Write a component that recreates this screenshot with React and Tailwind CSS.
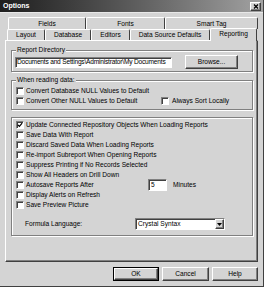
const raised = "border border-t-white border-l-white border-r-[#404040] border-b-[#404040] shadow-[inset_-1px_-1px_0_#808080]";
const sunken = "border border-t-[#808080] border-l-[#808080] border-r-white border-b-white shadow-[inset_1px_1px_0_#404040]";
const etched = "border border-[#808080] shadow-[inset_1px_1px_0_#fff,1px_1px_0_#fff]";

function Box({ checked }) {
    return (
        <span className={`flex h-[8px] w-[8px] shrink-0 items-center justify-center bg-white ${sunken}`}>
            {checked && (
                <svg viewBox="0 0 7 7" className="h-[6px] w-[6px]">
                    <path d="M1 3.3 L2.8 5.2 L6 1.4" stroke="#000" strokeWidth="1.4" fill="none" />
                </svg>
            )}
        </span>
    );
}

function Check({ label, checked, w = "", children }) {
    return (
        <div className="flex h-[10px] items-center">
            <Box checked={checked} />
            <span className={`ml-[2px] whitespace-nowrap ${w}`}>{label}</span>
            {children}
        </div>
    );
}

function Tab({ label, w, selected }) {
    return (
        <div
            className={`flex shrink-0 items-center justify-center rounded-t-[2px] border-l border-t border-r border-l-white border-t-white border-r-[#404040] ${w} ${
                selected ? "relative z-10 -mt-[1px] h-[13px] bg-[#d4d4d4] pb-[2px]" : "h-full"
            }`}
        >
            {label}
        </div>
    );
}

function Button({ label, def, w }) {
    return (
        <div className={`${def ? "border border-black" : ""} ${w} h-[14px]`}>
            <div className={`flex h-full w-full items-center justify-center ${raised}`}>{label}</div>
        </div>
    );
}

export default function App() {
    return (
        <div className="flex h-[287px] w-[264px] flex-col overflow-hidden border-r border-b border-[#404040] bg-[#d4d4d4] font-['Liberation_Sans',Arial,sans-serif] text-[6.6px] leading-[8px] text-black">
            {/* title bar */}
            <div className="flex h-[12px] shrink-0 items-center justify-between bg-gradient-to-r from-[#1e1e1e] to-[#a2a2a2] pl-[3px] pr-[2px]">
                <span className="text-[7px] font-bold text-white">Options</span>
                <div className={`flex h-[9px] w-[11px] items-center justify-center bg-[#d4d4d4] ${raised}`}>
                    <svg viewBox="0 0 6 5" className="h-[5px] w-[6px]">
                        <path d="M1 0.5 L5 4.5 M5 0.5 L1 4.5" stroke="#000" strokeWidth="1.3" />
                    </svg>
                </div>
            </div>
            <div className="h-[1px] shrink-0 bg-[#e8e8e8]" />

            {/* tabs */}
            <div className="mt-[4px] flex h-[12px] shrink-0 pl-[8px]">
                <Tab label="Fields" w="w-[78px]" />
                <Tab label="Fonts" w="w-[79px]" />
                <Tab label="Smart Tag" w="w-[93px]" />
            </div>
            <div className="flex h-[11px] shrink-0 items-start pl-[7px]">
                <Tab label="Layout" w="w-[38px]" />
                <Tab label="Database" w="w-[46px]" />
                <Tab label="Editors" w="w-[39px]" />
                <Tab label="Data Source Defaults" w="w-[80px]" />
                <Tab label="Reporting" w="w-[47px]" selected />
            </div>

            {/* panel */}
            <div className={`ml-[5px] h-[222px] w-[253px] shrink-0 pl-[5px] ${raised}`}>
                <fieldset className={`mt-[5px] w-[242px] pb-[2px] pl-[3px] ${etched}`}>
                    <legend className="ml-[1px] bg-[#d4d4d4] px-[1px] leading-[8px]">Report Directory</legend>
                    <div className="flex items-center pt-[1px]">
                        <div className={`flex h-[11px] w-[157px] items-center overflow-hidden whitespace-nowrap bg-white pl-[1px] tracking-[-0.2px] ${sunken}`}>
                            Documents and Settings\Administrator\My Documents
                        </div>
                        <div className={`ml-[13px] flex h-[14px] w-[53px] items-center justify-center ${raised}`}>Browse...</div>
                    </div>
                </fieldset>

                <fieldset className={`mt-[4px] w-[242px] pb-[3px] pl-[4px] ${etched}`}>
                    <legend className="bg-[#d4d4d4] px-[1px] leading-[8px]">When reading data:</legend>
                    <div className="pt-[2px]">
                        <Check label="Convert Database NULL Values to Default" />
                        <Check label="Convert Other NULL Values to Default" w="w-[135px]">
                            <Box />
                            <span className="ml-[3px] whitespace-nowrap">Always Sort Locally</span>
                        </Check>
                    </div>
                </fieldset>

                <div className={`mt-[7px] w-[242px] pb-[5px] pl-[4px] pt-[2px] ${etched}`}>
                    <Check label="Update Connected Repository Objects When Loading Reports" checked />
                    <Check label="Save Data With Report" />
                    <Check label="Discard Saved Data When Loading Reports" />
                    <Check label="Re-import Subreport When Opening Reports" />
                    <Check label="Suppress Printing if No Records Selected" />
                    <Check label="Show All Headers on Drill Down" />
                    <Check label="Autosave Reports After" w="w-[122px]">
                        <div className={`-my-[1px] flex h-[12px] w-[19px] items-center bg-white pl-[2px] ${sunken}`}>5</div>
                        <span className="ml-[6px]">Minutes</span>
                    </Check>
                    <Check label="Display Alerts on Refresh" />
                    <Check label="Save Preview Picture" />

                    <div className="mt-[8px] flex h-[12px] items-center pl-[9px]">
                        <span className="w-[110px] whitespace-nowrap">Formula Language:</span>
                        <div className={`flex h-[12px] w-[90px] items-center justify-between bg-white pl-[2px] ${sunken}`}>
                            <span>Crystal Syntax</span>
                            <div className={`flex h-[10px] w-[9px] items-center justify-center bg-[#d4d4d4] ${raised}`}>
                                <svg viewBox="0 0 5 3" className="h-[3px] w-[5px]">
                                    <path d="M0 0 L5 0 L2.5 3 Z" fill="#000" />
                                </svg>
                            </div>
                        </div>
                    </div>
                </div>
            </div>

            {/* buttons */}
            <div className="mt-[5px] flex justify-end gap-[3px] pr-[5px]">
                <Button label="OK" def w="w-[46px]" />
                <Button label="Cancel" w="w-[47px]" />
                <Button label="Help" w="w-[46px]" />
            </div>
        </div>
    );
}
